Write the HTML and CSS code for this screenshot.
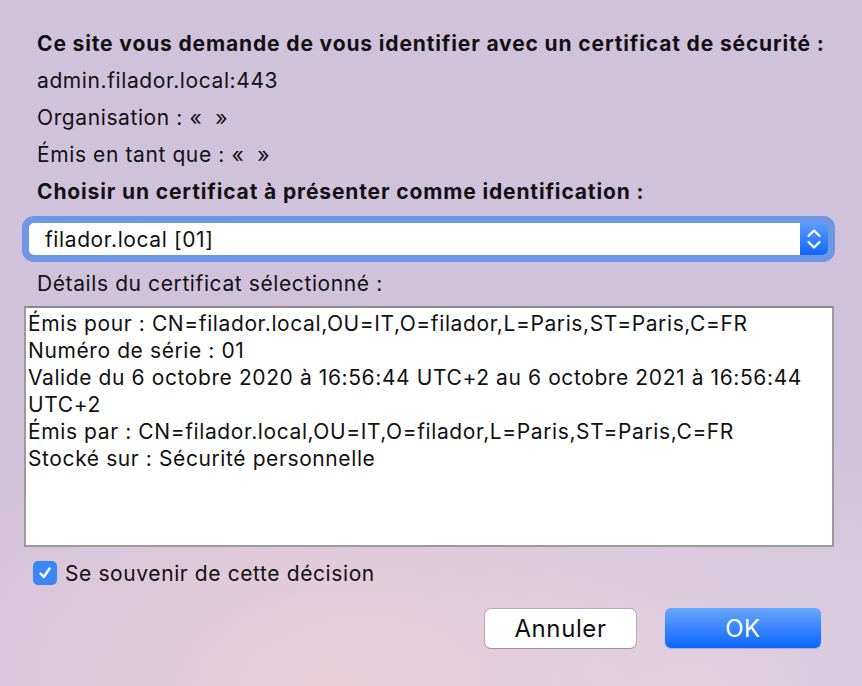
FILE: index.html
```html
<!DOCTYPE html>
<html lang="fr">
<head>
<meta charset="utf-8">
<title>Certificat</title>
<link rel="stylesheet" href="styles.css">
</head>
<body>
<div class="dialog">
  <p class="line bold">Ce site vous demande de vous identifier avec un certificat de sécurité :</p>
  <p class="line">admin.filador.local:443</p>
  <p class="line">Organisation : «&nbsp; »</p>
  <p class="line">Émis en tant que : «&nbsp; »</p>
  <p class="line bold">Choisir un certificat à présenter comme identification :</p>

  <div class="select">
    <span class="select-text">filador.local [01]</span>
    <span class="stepper">
      <svg width="16" height="24" viewBox="0 0 16 24" fill="none" stroke="#fff" stroke-width="2.2" stroke-linecap="round" stroke-linejoin="round">
        <path d="M2.5 9 L8 3.5 L13.5 9"/>
        <path d="M2.5 15 L8 20.5 L13.5 15"/>
      </svg>
    </span>
  </div>

  <p class="details-label">Détails du certificat sélectionné :</p>

  <div class="details">
    <div>Émis pour : CN=filador.local,OU=IT,O=filador,L=Paris,ST=Paris,C=FR</div>
    <div>Numéro de série : 01</div>
    <div>Valide du 6 octobre 2020 à 16:56:44 UTC+2 au 6 octobre 2021 à 16:56:44</div>
    <div>UTC+2</div>
    <div>Émis par : CN=filador.local,OU=IT,O=filador,L=Paris,ST=Paris,C=FR</div>
    <div>Stocké sur : Sécurité personnelle</div>
  </div>

  <label class="remember">
    <span class="checkbox">
      <svg width="16" height="16" viewBox="0 0 16 16" fill="none" stroke="#fff" stroke-width="2.4" stroke-linecap="round" stroke-linejoin="round">
        <path d="M3.5 8.5 L6.8 12 L12.5 3.5"/>
      </svg>
    </span>
    <span>Se souvenir de cette décision</span>
  </label>

  <div class="buttons">
    <button class="btn btn-cancel">Annuler</button>
    <button class="btn btn-ok">OK</button>
  </div>
</div>
</body>
</html>
```

FILE: styles.css
```css
html, body {
  margin: 0;
  padding: 0;
  height: 100%;
}

body {
  width: 862px;
  height: 686px;
  overflow: hidden;
  font-family: Inter, "Liberation Sans", Arial, sans-serif;
  font-size: 21px;
  letter-spacing: 0.6px;
  color: #111;
  background:
    radial-gradient(ellipse 480px 300px at 330px 686px, rgba(236, 208, 216, 0.95), rgba(236, 208, 216, 0) 100%),
    radial-gradient(ellipse 500px 260px at 700px 686px, rgba(226, 212, 226, 0.8), rgba(226, 212, 226, 0) 100%),
    #d1c2db;
}

.dialog {
  display: flex;
  flex-direction: column;
  padding: 25px 26px 0 24px;
}

.line {
  margin: 0;
  padding-left: 13px;
  line-height: 37px;
}

.bold {
  font-weight: 700;
  letter-spacing: 0.86px;
}

.select {
  margin: 13px 0 0 5px;
  width: 799px;
  height: 32px;
  box-sizing: border-box;
  background: #fff;
  border-radius: 5px;
  box-shadow: 0 0 0 7px #6d96e4;
  display: flex;
  align-items: center;
  justify-content: space-between;
}

.select-text {
  padding-left: 16px;
}

.stepper {
  width: 28px;
  height: 33px;
  margin-top: -1px;
  border-radius: 0 5px 5px 0;
  background: linear-gradient(#5f9dfc, #1068fb);
  display: flex;
  align-items: center;
  justify-content: center;
}

.details-label {
  margin: 16px 0 0;
  padding-left: 13px;
  line-height: 26px;
}

.details {
  margin-top: 9px;
  width: 810px;
  height: 241px;
  box-sizing: border-box;
  border: 2px solid #9b9b9b;
  border-top-color: #8a8a8a;
  background: #fff;
  padding: 2px 2px 0 2px;
  line-height: 27px;
  white-space: nowrap;
  overflow: hidden;
}

.remember {
  display: flex;
  align-items: center;
  gap: 8px;
  margin: 14px 0 0 9px;
  height: 24px;
}

.checkbox {
  width: 24px;
  height: 24px;
  border-radius: 5px;
  background: #3b87f6;
  display: flex;
  align-items: center;
  justify-content: center;
}

.buttons {
  display: flex;
  justify-content: flex-end;
  gap: 29px;
  margin-top: 24px;
  padding-right: 15px;
}

.btn {
  font-family: Inter, "Liberation Sans", Arial, sans-serif;
  font-size: 24px;
  letter-spacing: 0.6px;
  height: 39px;
  border-radius: 6px;
  border: none;
  padding: 0;
}

.btn-cancel {
  width: 151px;
  background: #fff;
  color: #111;
  box-shadow: 0 0 0 1px rgba(120, 100, 130, 0.35), 0 1px 1px rgba(80, 60, 90, 0.25);
}

.btn-ok {
  width: 156px;
  height: 40px;
  margin-top: -1px;
  color: #fff;
  background: linear-gradient(#6aa6fe, #0a67fe);
  box-shadow: 0 1px 1px rgba(40, 80, 180, 0.25);
}
```
